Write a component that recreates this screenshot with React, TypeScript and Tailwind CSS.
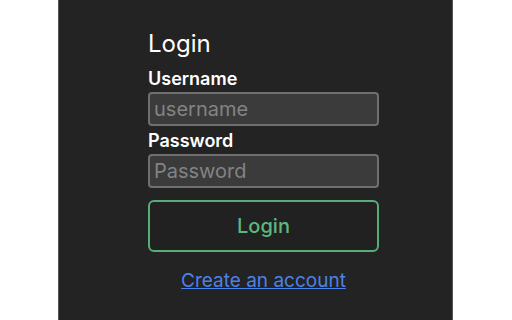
import React, { useState } from "react";

const App = () => {
  const [username, setUsername] = useState("");
  const [password, setPassword] = useState("");

  return (
    <div className="w-[512px] h-[320px] bg-white flex font-['Inter','Liberation_Sans',sans-serif]">
      <div className="ml-[58px] w-[395px] h-[320px] bg-[#232323] border-x border-[#555555] pl-[89px] pt-[29px]">
        <div className="w-[231px] flex flex-col">
          <h1 className="text-[24px] leading-[30px] text-white">Login</h1>

          <label className="mt-[9px] text-[18px] leading-[22px] font-semibold text-white">
            Username
          </label>
          <input
            value={username}
            onChange={(e) => setUsername(e.target.value)}
            placeholder="username"
            className="mt-[2px] h-[34px] w-full rounded-[4px] border-2 border-[#6f6f6f] bg-[#3b3b3b] px-[4px] text-[20px] text-white outline-none placeholder:text-[#838383]"
          />

          <label className="mt-[4px] text-[18px] leading-[22px] font-semibold text-white">
            Password
          </label>
          <input
            value={password}
            onChange={(e) => setPassword(e.target.value)}
            type="password"
            placeholder="Password"
            className="mt-[2px] h-[34px] w-full rounded-[4px] border-2 border-[#6f6f6f] bg-[#3b3b3b] px-[4px] text-[20px] text-white outline-none placeholder:text-[#838383]"
          />

          <button className="mt-[12px] h-[52px] w-full rounded-[6px] border-2 border-[#55ae77] bg-[#212121] text-[20px] font-medium text-[#5cb87e]">
            Login
          </button>

          <a
            href="#"
            className="mt-[17px] self-center text-[19px] leading-[24px] text-[#4b82ea] underline"
          >
            Create an account
          </a>
        </div>
      </div>
    </div>
  );
};

export default App;
